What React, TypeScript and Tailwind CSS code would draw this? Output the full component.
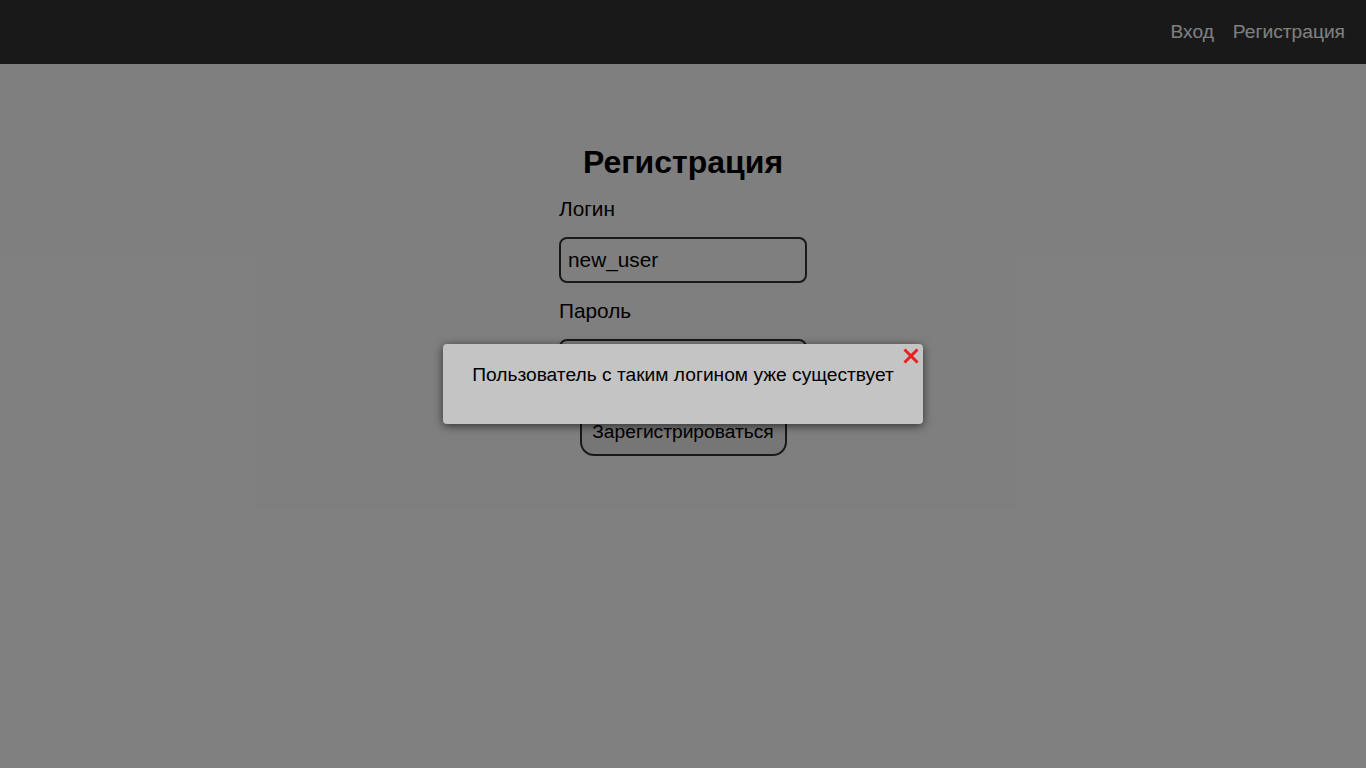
import React from "react";

export default function App() {
  return (
    <div className="relative min-h-screen bg-white" style={{ fontFamily: '"Liberation Sans", Arial, sans-serif' }}>
      <header className="h-16 bg-[#333333] flex items-center justify-end pr-[21px] gap-[19px]">
        <a className="text-[19.2px] text-white">Вход</a>
        <a className="text-[19.2px] text-white">Регистрация</a>
      </header>
      <main className="flex flex-col items-center pt-[78px]">
        <h1 className="text-[32px] leading-[40px] font-bold text-black">Регистрация</h1>
        <div className="w-[248px] flex flex-col">
          <label className="mt-[13px] text-[20.8px] leading-[28px] text-black">Логин</label>
          <input
            className="mt-[14px] h-[46px] w-[248px] rounded-[8px] border-2 border-[#333] bg-white pl-[7px] pr-[7px] pb-[1px] text-[20.8px] text-black outline-none"
            defaultValue="new_user"
          />
          <label className="mt-[14px] text-[20.8px] leading-[28px] text-black">Пароль</label>
          <input
            type="password"
            className="mt-[14px] h-[46px] w-[248px] rounded-[8px] border-2 border-[#333] bg-white px-[7px] text-[20.8px] text-black outline-none"
          />
        </div>
        <button className="mt-[23px] h-[48px] w-[207px] rounded-[14px] border-2 border-[#333] bg-[#ececec] text-[19.2px] text-black">
          Зарегистрироваться
        </button>
      </main>
      <div className="absolute inset-0 bg-black/50" />
      <div className="absolute left-[443px] top-[344px] w-[480px] h-[80px] rounded-[4px] bg-[#c4c4c4] shadow-[0_2px_10px_rgba(0,0,0,0.6)]">
        <p className="pt-[20px] text-center text-[19.2px] leading-[22px] text-black">
          Пользователь с таким логином уже существует
        </p>
        <svg className="absolute right-[3px] top-[3px]" width="18" height="18" viewBox="0 0 18 18">
          <path d="M2.5 2.5 L15.5 15.5 M15.5 2.5 L2.5 15.5" stroke="#e42222" strokeWidth="3" strokeLinecap="butt" />
        </svg>
      </div>
    </div>
  );
}
